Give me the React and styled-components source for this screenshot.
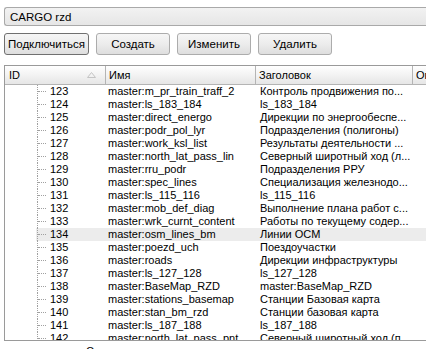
import React from 'react';
import styled, { createGlobalStyle } from 'styled-components';

const GlobalStyle = createGlobalStyle`
  html, body {
    margin: 0;
    padding: 0;
    background: #ffffff;
    overflow: hidden;
  }
  body {
    font-family: 'Liberation Sans', Arial, sans-serif;
    font-size: 11px;
    color: #000000;
  }
`;

const rows = [
  ['123', 'master:m_pr_train_traff_2', 'Контроль продвижения по...'],
  ['124', 'master:ls_183_184', 'ls_183_184'],
  ['125', 'master:direct_energo', 'Дирекции по энергообеспе...'],
  ['126', 'master:podr_pol_lyr', 'Подразделения (полигоны)'],
  ['127', 'master:work_ksl_list', 'Результаты деятельности ...'],
  ['128', 'master:north_lat_pass_lin', 'Северный широтный ход (л...'],
  ['129', 'master:rru_podr', 'Подразделения РРУ'],
  ['130', 'master:spec_lines', 'Специализация железнодо...'],
  ['131', 'master:ls_115_116', 'ls_115_116'],
  ['132', 'master:mob_def_diag', 'Выполнение плана работ с...'],
  ['133', 'master:wrk_curnt_content', 'Работы по текущему содер...'],
  ['134', 'master:osm_lines_bm', 'Линии ОСМ'],
  ['135', 'master:poezd_uch', 'Поездоучастки'],
  ['136', 'master:roads', 'Дирекции инфраструктуры'],
  ['137', 'master:ls_127_128', 'ls_127_128'],
  ['138', 'master:BaseMap_RZD', 'master:BaseMap_RZD'],
  ['139', 'master:stations_basemap', 'Станции Базовая карта'],
  ['140', 'master:stan_bm_rzd', 'Станции базовая карта'],
  ['141', 'master:ls_187_188', 'ls_187_188'],
  ['142', 'master:north_lat_pass_pnt', 'Северный широтный ход (п...'],
];

const Page = styled.div`
  padding: 7px 0 0 4px;
  width: 460px;
`;

const Combo = styled.div`
  height: 17px;
  border: 1px solid #a9a9a9;
  border-right: none;
  border-radius: 3px 0 0 3px;
  background: linear-gradient(#f2f2f2, #e6e6e6);
  display: flex;
  align-items: center;
  padding-left: 5px;
  font-size: 11.5px;
`;

const Toolbar = styled.div`
  display: flex;
  gap: 7px;
  margin-top: 7px;
`;

const Button = styled.button`
  width: ${(p) => p.$w}px;
  height: 22px;
  padding: 0;
  font-family: inherit;
  font-size: 11.5px;
  color: #000;
  border: 1px solid ${(p) => (p.$focused ? '#707070' : '#acacac')};
  border-radius: 3px;
  background: linear-gradient(#f6f6f6 0%, #ececec 50%, #dedede 100%);
`;

const Frame = styled.div`
  margin-top: 10px;
  height: 274px;
  border: 1px solid #9a9a9a;
  overflow: hidden;
  background: #fff;
`;

const Grid = styled.div`
  display: grid;
  grid-template-columns: 101px 150px 157px 200px;
`;

const HeadCell = styled.div`
  position: relative;
  height: 19px;
  line-height: 19px;
  padding-left: ${(p) => p.$pad || 3}px;
  border-right: 1px solid #b4b4b4;
  border-bottom: 1px solid #b4b4b4;
  background: linear-gradient(#ffffff, #f0f0f0 60%, #e6e6e6);
  box-sizing: border-box;
  white-space: nowrap;
  overflow: hidden;
`;

const SortMark = styled.svg`
  position: absolute;
  right: 9px;
  top: 6px;
`;

const Row = styled.div`
  display: grid;
  grid-template-columns: 101px 150px 157px 200px;
  height: 13px;
  line-height: 13px;
  background: ${(p) =>
    p.$hover ? 'linear-gradient(to right, transparent 31px, #ececec 31px)' : 'transparent'};
`;

const Cell = styled.div`
  white-space: nowrap;
  overflow: hidden;
  padding-left: ${(p) => p.$pad || 2}px;
`;

const IdCell = styled.div`
  position: relative;
  padding-left: 45px;
  white-space: nowrap;
  &::before {
    content: '';
    position: absolute;
    left: 32px;
    top: 0;
    bottom: 0;
    border-left: 1px dotted #a0a0a0;
  }
  &::after {
    content: '';
    position: absolute;
    left: 33px;
    width: 8px;
    top: 6px;
    border-top: 1px dotted #a0a0a0;
  }
`;

const Footer = styled.div`
  padding-left: 82px;
  margin-top: 4px;
  color: #000;
`;

export default function App() {
  return (
    <>
      <GlobalStyle />
      <Page>
        <Combo>CARGO rzd</Combo>
        <Toolbar>
          <Button $w={85} $focused>Подключиться</Button>
          <Button $w={74}>Создать</Button>
          <Button $w={74}>Изменить</Button>
          <Button $w={74}>Удалить</Button>
        </Toolbar>
        <Frame>
          <Grid>
            <HeadCell $pad={4}>
              ID
              <SortMark width="9" height="6" viewBox="0 0 9 6">
                <path d="M0.5 5.5 L4.5 0.5 L8.5 5.5 Z" fill="none" stroke="#c4c4c4" />
              </SortMark>
            </HeadCell>
            <HeadCell>Имя</HeadCell>
            <HeadCell>Заголовок</HeadCell>
            <HeadCell>Описание</HeadCell>
          </Grid>
          {rows.map(([id, name, title]) => (
            <Row key={id} $hover={id === '134'}>
              <IdCell>{id}</IdCell>
              <Cell>{name}</Cell>
              <Cell $pad={4}>{title}</Cell>
              <Cell />
            </Row>
          ))}
        </Frame>
        <Footer>Создать</Footer>
      </Page>
    </>
  );
}
